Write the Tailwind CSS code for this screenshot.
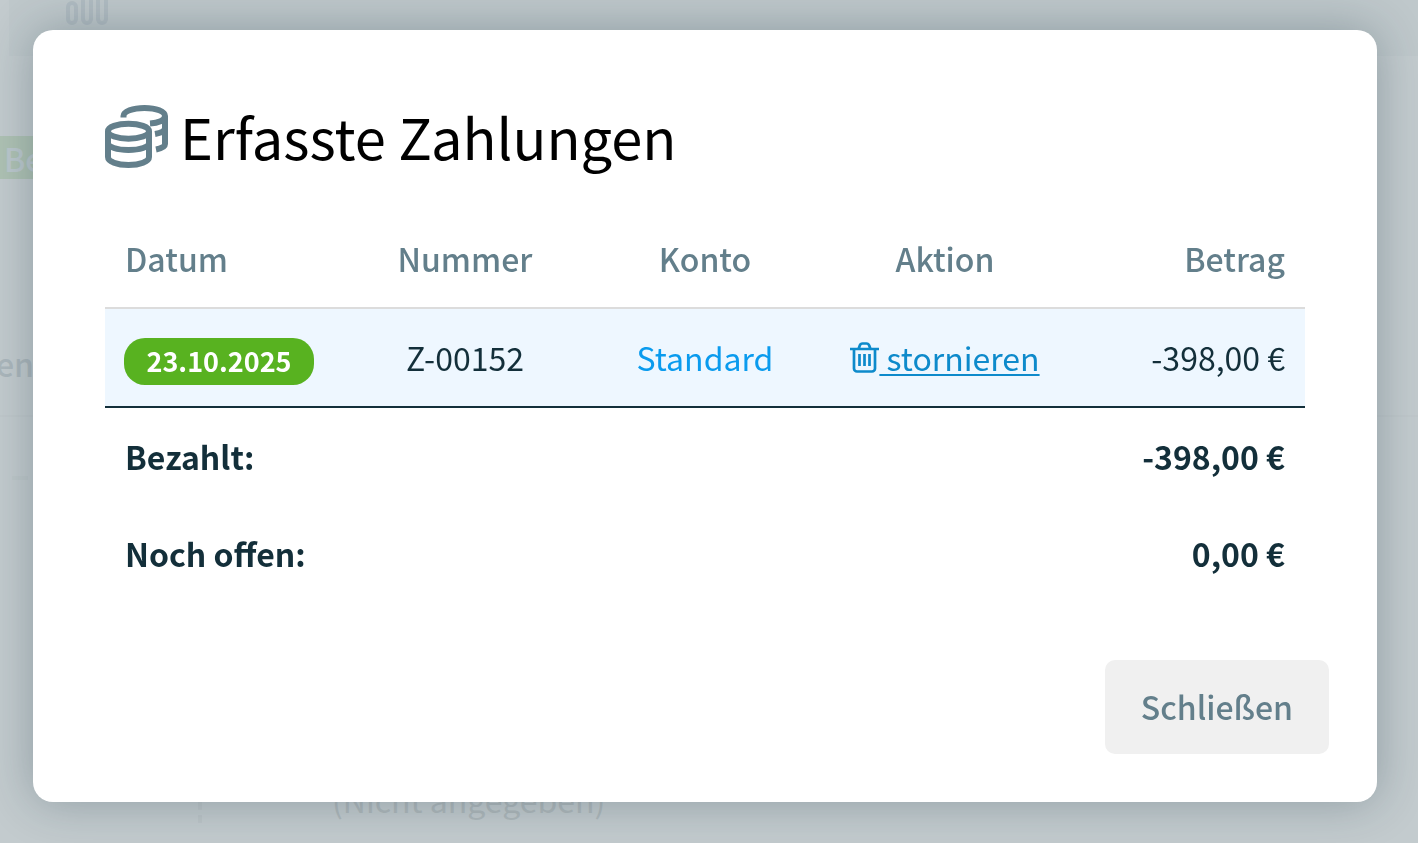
<!DOCTYPE html>
<html lang="de">
<head>
    <meta charset="UTF-8">
    <meta name="viewport" content="width=device-width, initial-scale=1.0">
    <title>Erfasste Zahlungen</title>
    <script src="https://cdn.jsdelivr.net/npm/@tailwindcss/browser@4"></script>
</head>
<body class="h-screen overflow-hidden bg-[#c3cbce] font-['Noto_Sans_CJK_SC','Noto_Sans',sans-serif] text-[32px] leading-[48px] text-[#132f3a]">
    <!-- Page behind the dialog -->
    <main class="flex h-screen flex-col overflow-hidden" aria-hidden="true">
        <div class="ml-[9px] flex h-[56px] shrink-0 items-start bg-[#bfc8cb] pl-[57px]">
            <svg class="h-[25px] w-[42px]" viewBox="0 0 42 25" fill="none" stroke="#b1bcc2" stroke-width="4">
                <rect x="2" y="3" width="8" height="20" rx="4"/>
                <rect x="17" y="-10" width="8" height="33" rx="4"/>
                <rect x="32" y="-10" width="8" height="33" rx="4"/>
            </svg>
        </div>
        <div class="mt-20 flex h-[43px] w-[120px] shrink-0 items-center bg-[#afc2b4] pl-1 font-medium text-[#bcc8cd]">Bezahlt</div>
        <div class="mt-[160px] flex h-[78px] shrink-0 border-b-2 border-[#c0c8cb] font-medium text-[#acb7bc]"><span class="-ml-1">en</span></div>
        <div class="mt-[59px] ml-3 w-4 border-t-4 border-[#bfc8ca]"></div>
        <div class="mt-[295px] ml-[198px] flex border-l-4 border-dashed border-[#bdc5c8] pl-[130px] text-[#b0b9bc]">(Nicht angegeben)</div>
    </main>

    <div class="fixed inset-0 pt-[30px] pr-[41px] pl-[33px]">
        <section role="dialog" aria-modal="true" aria-labelledby="title" class="rounded-[20px] bg-white pb-12 shadow-[0_0_48px_rgba(19,47,58,0.3)]">
            <div class="px-[72px] pt-[72px]">
                <h1 id="title" class="flex h-[68px] items-center gap-3 text-[56px] text-black">
                    <svg class="size-[63px] shrink-0" viewBox="0 0 63 63" fill="none" stroke="#637f8b" stroke-width="6" aria-hidden="true">
                        <ellipse cx="23.5" cy="26.2" rx="20.5" ry="7.5"/>
                        <path d="M3 26v26c0 4.500 9 8 20.500 8S44 56.500 44 52V26M3 38c0 4 9 7 20.500 7S44 42 44 38"/>
                        <path d="M18.500 12.500V11c0-4.500 9-8 21-8s20.500 3.500 20.500 8-7 7-15 7.500M60 11v28c0 2.500-4 4.500-9 5.500M60 23c0 3-4 5-10 6"/>
                    </svg>
                    Erfasste Zahlungen
                </h1>
                <table class="mt-[38px] w-full table-fixed border-collapse">
                    <thead>
                        <tr class="h-[100px] border-b-2 border-[#dcdcdc] text-[#637f8b]">
                            <th class="px-5 text-left font-medium">Datum</th>
                            <th class="px-5 font-medium">Nummer</th>
                            <th class="px-5 font-medium">Konto</th>
                            <th class="px-5 font-medium">Aktion</th>
                            <th class="px-5 text-right font-medium">Betrag</th>
                        </tr>
                    </thead>
                    <tbody>
                        <tr class="h-[99px] border-b-2 border-[#132f3a] bg-[#eef7ff] text-center">
                            <td class="px-[19px] pt-2 text-left"><span class="flex h-[47px] w-[190px] items-center justify-center rounded-[21px] bg-[#58b220] pb-0.5 text-[27px] font-bold text-white">23.10.2025</span></td>
                            <td class="pb-0.5">Z-00152</td>
                            <td class="pb-0.5 text-[#0a9bee]">Standard</td>
                            <td>
                                <a href="#" class="inline-flex text-[#0d8acb]">
                                    <svg class="mt-2 h-8 w-[29px]" viewBox="0 0 29 32" fill="none" stroke="currentColor" stroke-width="2.700" stroke-linejoin="round" aria-hidden="true">
                                        <path d="M0 8h29M4 8v19.500a3 3 0 0 0 3 3h15a3 3 0 0 0 3-3V8M8.500 8l1.300-3.500Q10.500 2.500 12.500 2.500h4q2 0 2.700 2L20.500 8M9.500 13v12M14.500 13v12M19.500 13v12"/>
                                    </svg>
                                    <span class="whitespace-pre underline decoration-2 underline-offset-3"> stornieren</span>
                                </a>
                            </td>
                            <td class="px-5 pb-0.5 text-right">-398,00 €</td>
                        </tr>
                    </tbody>
                    <tfoot class="font-bold">
                        <tr class="h-[97px]">
                            <th colspan="4" class="px-5 text-left">Bezahlt:</th>
                            <td class="px-5 text-right">-398,00 €</td>
                        </tr>
                        <tr class="h-[97px]">
                            <th colspan="4" class="px-5 text-left">Noch offen:</th>
                            <td class="px-5 text-right">0,00 €</td>
                        </tr>
                    </tfoot>
                </table>
            </div>
            <div class="mt-[59px] flex justify-end pr-12">
                <button type="button" class="h-[94px] rounded-[10px] bg-[#f0f0f0] px-9 pb-0.5 font-medium text-[#637f8b]">Schließen</button>
            </div>
        </section>
    </div>
</body>
</html>
